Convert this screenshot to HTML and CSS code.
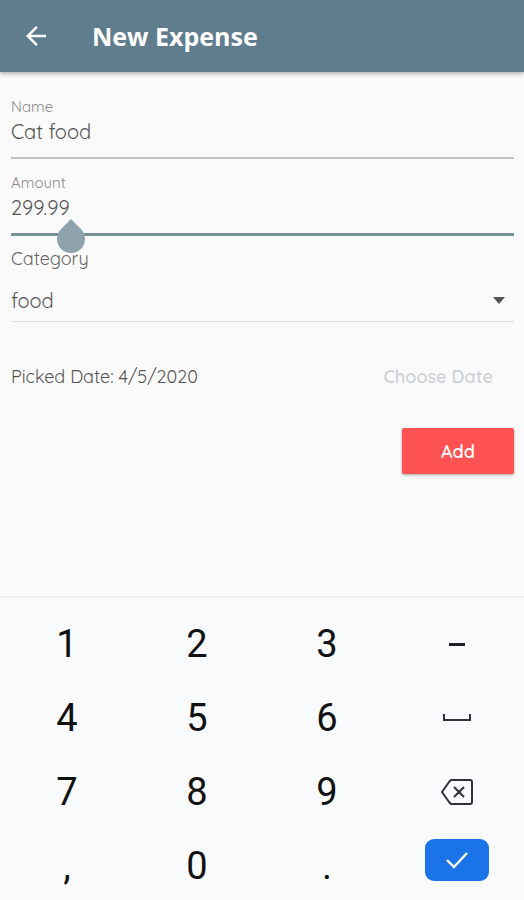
FILE: index.html
```
<!DOCTYPE html>
<html lang="en">
<head>
    <meta charset="UTF-8">
    <meta name="viewport" content="width=device-width, initial-scale=1.0">
    <link rel="stylesheet" href="styles.css">
    <title>New Expense</title>
</head>
<body>
    <header class="app-bar">
        <button class="back" type="button" aria-label="Back">
            <svg width="30" height="30" viewBox="0 0 24 24" fill="currentColor"><path d="M20 11H7.8l5.6-5.6L12 4l-8 8 8 8 1.4-1.4L7.8 13H20z"/></svg>
        </button>
        <h1>New Expense</h1>
    </header>

    <form class="expense-form">
        <div class="field">
            <label for="name">Name</label>
            <input id="name" type="text" value="Cat food">
        </div>
        <div class="field active">
            <label for="amount">Amount</label>
            <input id="amount" type="text" inputmode="decimal" value="299.99">
            <svg class="cursor-handle" width="28" height="34" viewBox="0 0 28 34"><path d="M14 0 23.9 10.1A14 14 0 1 1 4.1 10.1z" fill="#8fa3ad"/></svg>
        </div>
        <label class="category-label" for="category">Category</label>
        <div class="select-wrap">
            <select id="category">
                <option>food</option>
            </select>
            <svg class="arrow" width="12" height="7" viewBox="0 0 12 7"><path d="M0 0h12L6 7z" fill="#555"/></svg>
        </div>
        <div class="date-row">
            <span>Picked Date: 4/5/2020</span>
            <button class="choose-date" type="button">Choose Date</button>
        </div>
        <button class="add" type="button">Add</button>
    </form>

    <div class="keypad">
        <button type="button">1</button>
        <button type="button">2</button>
        <button type="button">3</button>
        <button type="button" aria-label="Minus">
            <svg width="16" height="3" viewBox="0 0 16 3"><path d="M0 0h16v3H0z" fill="#202124"/></svg>
        </button>
        <button type="button">4</button>
        <button type="button">5</button>
        <button type="button">6</button>
        <button type="button" aria-label="Space">
            <svg width="28" height="8" viewBox="0 0 28 8" fill="none" stroke="#303236" stroke-width="2"><path d="M1 0v6h26V0"/></svg>
        </button>
        <button type="button">7</button>
        <button type="button">8</button>
        <button type="button">9</button>
        <button type="button" aria-label="Delete">
            <svg width="32" height="26" viewBox="0 0 32 26" fill="none" stroke="#303236" stroke-width="2" stroke-linejoin="round"><path d="M10 1h19a2 2 0 0 1 2 2v20a2 2 0 0 1-2 2H10L8 23 1 13 8 3zM13 8l10 10M23 8 13 18"/></svg>
        </button>
        <button type="button">,</button>
        <button type="button">0</button>
        <button type="button">.</button>
        <button class="done" type="button" aria-label="Done">
            <svg width="24" height="18" viewBox="0 0 24 18" fill="none" stroke="#fff" stroke-width="2.4"><path d="m2 9 7 7L22 2"/></svg>
        </button>
    </div>
</body>
</html>
```
FILE: styles.css
```
* {
    box-sizing: border-box;
}

body {
    display: flex;
    flex-direction: column;
    min-height: 100vh;
    margin: 0;
    background-color: #fafafa;
    color: #555;
    font-family: Quicksand, Lato, sans-serif;
    font-size: 18px;
    font-weight: 400;
}

button, input, select {
    margin: 0;
    padding: 0;
    border: none;
    background: none;
    color: inherit;
    font: inherit;
}

button {
    cursor: pointer;
}

.app-bar {
    display: flex;
    align-items: center;
    gap: 41px;
    height: 72px;
    padding: 0 21px;
    background-color: #607d8e;
    color: #fff;
    box-shadow: 0 1px 5px rgba(0, 0, 0, 0.4);
}

.back {
    display: flex;
}

h1 {
    margin: 0;
    font-family: "Open Sans", sans-serif;
    font-size: 25px;
    font-weight: 700;
}

.expense-form {
    display: flex;
    flex-direction: column;
    padding: 25px 10px 25px 11px;
}

.field {
    position: relative;
    display: flex;
    flex-direction: column;
    margin-bottom: 14px;
    padding-bottom: 12px;
    border-bottom: 2px solid #c2c2c2;
}

.field label {
    color: #8a8a8a;
    font-size: 15px;
    line-height: 20px;
}

.field input {
    width: 100%;
    height: 28px;
    font-size: 20px;
    outline: none;
}

.field.active {
    margin-bottom: 12px;
    border-bottom: 3px solid #78909a;
}

.cursor-handle {
    position: absolute;
    left: 46px;
    top: 46px;
}

.category-label {
    color: #666;
    line-height: 22px;
}

.select-wrap {
    position: relative;
    margin-top: 10px;
    border-bottom: 1px solid #ddd;
}

.select-wrap select {
    width: 100%;
    height: 41px;
    font-size: 20px;
    appearance: none;
}

.arrow {
    position: absolute;
    right: 9px;
    top: 17px;
    pointer-events: none;
}

.date-row {
    display: flex;
    justify-content: space-between;
    align-items: center;
    height: 44px;
    margin: 32px 0 30px;
}

.choose-date {
    padding: 0 21px;
    color: #ced2d6;
    font-weight: 600;
}

.add {
    align-self: flex-end;
    width: 112px;
    height: 46px;
    border-radius: 2px;
    background-color: #ff5252;
    color: #fff;
    font-weight: 600;
    box-shadow: 0 1px 3px rgba(0, 0, 0, 0.35);
}

.keypad {
    display: grid;
    grid-template-columns: repeat(4, 1fr);
    grid-auto-rows: 68px;
    row-gap: 6px;
    margin-top: auto;
    padding: 12px 2px 0;
    border-top: 2px solid #eef0f1;
    background-color: #f9fafc;
    color: #111;
    font-family: Roboto, sans-serif;
    font-size: 38px;
    font-weight: 400;
}

.keypad button {
    display: flex;
    justify-content: center;
    align-items: center;
}

.keypad .done {
    justify-self: center;
    width: 64px;
    height: 42px;
    margin-top: 7px;
    border-radius: 9px;
    background-color: #1a73e8;
}
```
